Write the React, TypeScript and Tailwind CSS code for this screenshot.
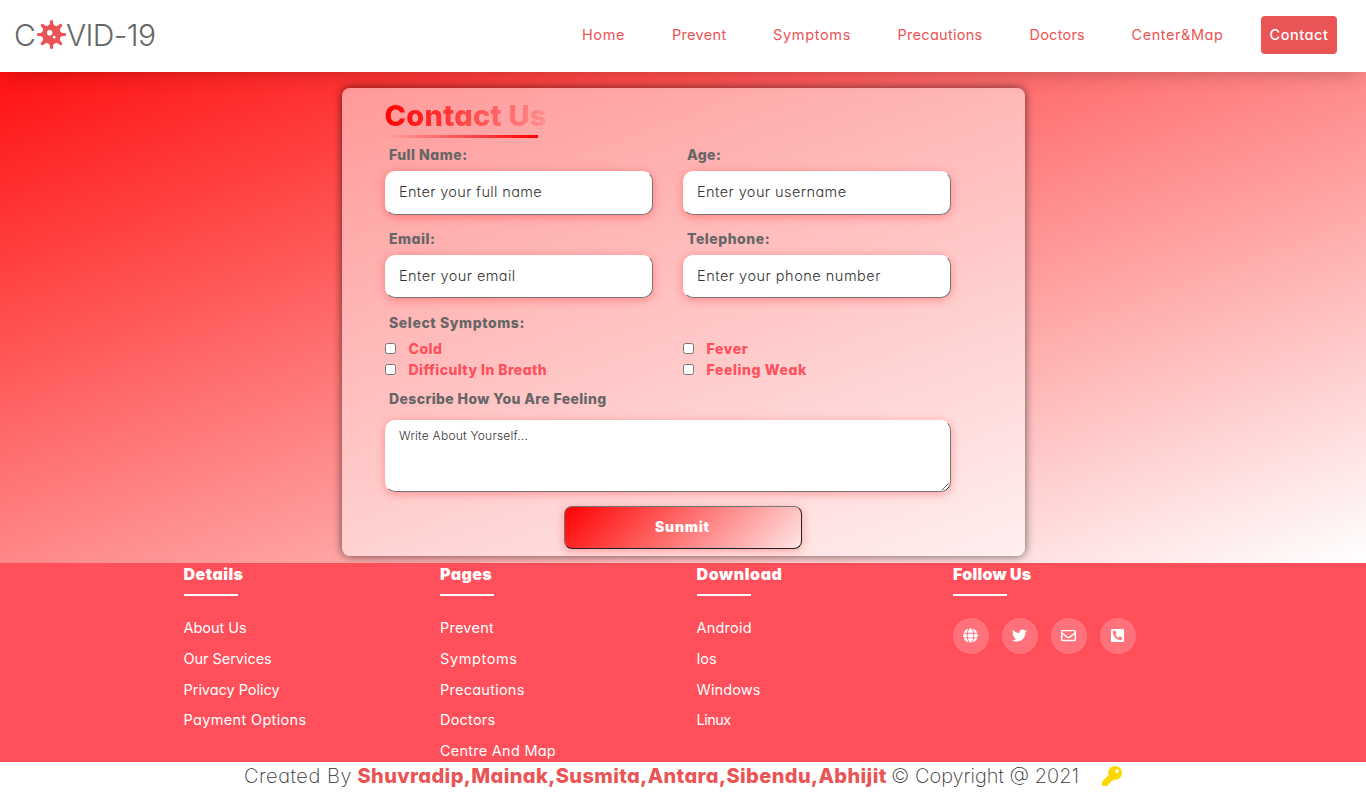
import { FaGlobe, FaKey, FaPhoneSquareAlt, FaRegEnvelope, FaTwitter, FaVirus } from "react-icons/fa";

const navLinks = [
  { label: "Home", className: "w-[90px] tracking-[0.59px]" },
  { label: "Prevent", className: "w-[101px] tracking-[0.32px]" },
  { label: "Symptoms", className: "w-[124.5px] tracking-[0.66px]" },
  { label: "Precautions", className: "w-[132px] tracking-[0.29px]" },
  { label: "Doctors", className: "w-[102px] tracking-[0.23px]" },
  { label: "Center&Map", className: "w-[129.5px] tracking-[0.57px]" },
];

const fields = [
  { label: "Full Name:", labelClass: "tracking-[0.5px]", placeholder: "Enter your full name", inputClass: "h-11 tracking-[0.35px]" },
  { label: "Age:", labelClass: "tracking-[0.4px]", placeholder: "Enter your username", inputClass: "h-11 tracking-[0.43px]" },
  { label: "Email:", labelClass: "tracking-[0.5px]", placeholder: "Enter your email", inputClass: "h-[43px] tracking-[0.42px]" },
  { label: "Telephone:", labelClass: "tracking-[0.52px]", placeholder: "Enter your phone number", inputClass: "h-[43px] tracking-[0.51px]" },
];

const symptoms = [
  { label: "Cold", className: "tracking-[0.5px]" },
  { label: "Fever", className: "tracking-[0.6px]" },
  { label: "Difficulty In Breath", className: "tracking-[0.42px]" },
  { label: "Feeling Weak", className: "tracking-[0.6px]" },
];

const footerColumns = [
  {
    title: "Details",
    titleClass: "tracking-[0.47px]",
    links: [
      { label: "About Us", className: "tracking-[-0.03px]" },
      { label: "Our Services", className: "tracking-[-0.04px]" },
      { label: "Privacy Policy", className: "tracking-[-0.03px]" },
      { label: "Payment Options", className: "tracking-[0.34px]" },
    ],
  },
  {
    title: "Pages",
    titleClass: "tracking-[0.38px]",
    links: [
      { label: "Prevent", className: "tracking-[0.24px]" },
      { label: "Symptoms", className: "tracking-[0.6px]" },
      { label: "Precautions", className: "tracking-[0.25px]" },
      { label: "Doctors", className: "tracking-[0.22px]" },
      { label: "Centre And Map", className: "tracking-[0.25px]" },
    ],
  },
  {
    title: "Download",
    titleClass: "tracking-[0.6px]",
    links: [
      { label: "Android", className: "tracking-[0.22px]" },
      { label: "Ios", className: "tracking-[-0.08px]" },
      { label: "Windows", className: "tracking-[0.11px]" },
      { label: "Linux", className: "tracking-[-0.5px]" },
    ],
  },
];

const socials = [
  { name: "website", Icon: FaGlobe },
  { name: "twitter", Icon: FaTwitter },
  { name: "mail", Icon: FaRegEnvelope },
  { name: "phone", Icon: FaPhoneSquareAlt },
];

const controlClass =
  "w-full rounded-[10px] border border-white border-r-[#767676] border-b-[#767676] bg-white px-[13.5px] font-light text-[#333] shadow-[0_2px_10px_rgba(255,0,0,0.3)] outline-none placeholder:text-[#333] placeholder:opacity-100";

function Navbar() {
  return (
    <header className="relative z-10 flex h-[72px] items-start justify-between bg-white pr-[29px] pl-[14px] shadow-[0_8px_20px_-8px_rgba(0,0,0,0.25)]">
      <a href="#" className="mt-[13px] flex items-center text-[30px] leading-[44px] font-light text-[#666]">
        <span className="w-[23px]">C</span>
        <FaVirus className="-mt-0.5 size-[29px] text-[#ea5455]" />
        <span className="tracking-[-0.6px]">VID-19</span>
      </a>
      <nav className="mt-4 flex h-[38px] items-center text-[14.5px] text-[#ea5455]">
        {navLinks.map((l) => (
          <a key={l.label} href="#" className={l.className}>
            {l.label}
          </a>
        ))}
        <a href="#" className="flex h-[38px] w-[76px] items-center justify-center rounded bg-[#ea5455] font-medium tracking-[0.54px] text-white">
          Contact
        </a>
      </nav>
    </header>
  );
}

function SectionTitle() {
  return (
    <div className="flex h-[50px] flex-col items-start">
      <h1 className="mt-1.5 bg-[linear-gradient(to_right,#ff0000,#ff8f8f)] bg-clip-text text-[29px] leading-[44px] font-extrabold tracking-[0.25px] text-transparent">Contact Us</h1>
      <div className="-mt-[3px] h-[3px] w-[153px] shrink-0 bg-[linear-gradient(to_left,#ff0000,transparent)]" />
    </div>
  );
}

function ContactForm() {
  return (
    <form className="mx-auto h-[468px] w-[683px] rounded-lg bg-white/50 pr-[74px] pl-[43px] shadow-[0_0_10px_rgba(0,0,0,0.6)]">
      <SectionTitle />
      <div className="grid grid-cols-[268px_268px] gap-x-[30px] pt-[7px]">
        {fields.map((f) => (
          <label key={f.label} className="flex h-[84px] flex-col">
            <span className={`pl-[4.5px] text-[14px] leading-[20px] font-extrabold text-[#666] ${f.labelClass}`}>{f.label}</span>
            <input type="text" placeholder={f.placeholder} className={`mt-[6px] pb-[3px] text-[14.5px] ${controlClass} ${f.inputClass}`} />
          </label>
        ))}
      </div>
      <h2 className="pl-[4.5px] text-[14px] leading-[20px] font-extrabold tracking-[0.6px] text-[#666]">Select Symptoms:</h2>
      <div className="grid grid-cols-[268px_268px] gap-x-[30px] pt-[5px]">
        {symptoms.map((s) => (
          <label key={s.label} className="flex h-[21px] items-center">
            <input type="checkbox" className="mr-[13px] size-[11px] appearance-none rounded-[2.5px] border border-[#767676] bg-white" />
            <span className={`text-[14px] leading-[21px] font-extrabold text-[#ff4f5a] ${s.className}`}>{s.label}</span>
          </label>
        ))}
      </div>
      <h2 className="mt-[9px] pl-[4.5px] text-[14px] leading-[20px] font-extrabold tracking-[0.38px] text-[#666]">Describe How You Are Feeling</h2>
      <textarea placeholder="Write About Yourself..." className={`mt-[11px] block h-[72px] pt-[6px] text-[12px] leading-[18px] tracking-[0.23px] ${controlClass}`} />
      <button
        type="button"
        className="mt-[14px] ml-[179px] block h-[43px] w-[238px] rounded-lg border border-[#767676] border-r-[#222] border-b-[#222] bg-[linear-gradient(135deg,#ff0000,#ffe5e5)] pb-0.5 text-[14px] font-black tracking-[0.75px] text-white shadow-[0_2px_10px_rgba(255,0,0,0.3)]"
      >
        Sunmit
      </button>
    </form>
  );
}

function Footer() {
  return (
    <footer className="h-[199px] bg-[#ff4f5a] pl-[183.5px] text-white">
      <div className="grid grid-cols-[repeat(4,256.5px)]">
        {footerColumns.map((c) => (
          <div key={c.title}>
            <h3 className={`h-[23px] text-[16px] leading-[23px] font-black ${c.titleClass}`}>{c.title}</h3>
            <div className="mt-2 h-0.5 w-[54px] bg-white" />
            <ul className="mt-[17px] text-[14.5px] leading-[30.75px]">
              {c.links.map((l) => (
                <li key={l.label} className={l.className}>
                  <a href="#">{l.label}</a>
                </li>
              ))}
            </ul>
          </div>
        ))}
        <div>
          <h3 className="h-[23px] text-[16px] leading-[23px] font-black tracking-[0.22px]">Follow Us</h3>
          <div className="mt-2 h-0.5 w-[54px] bg-white" />
          <div className="mt-[22px] flex gap-[13px]">
            {socials.map(({ name, Icon }) => (
              <a key={name} href="#" aria-label={name} className="flex size-9 items-center justify-center rounded-full bg-white/20 pr-px pb-px">
                <Icon className="size-[15px]" />
              </a>
            ))}
          </div>
        </div>
      </div>
    </footer>
  );
}

export default function App() {
  return (
    <div className="h-[792px] overflow-hidden bg-white font-['Inter','Noto_Sans',sans-serif] [font-feature-settings:'cv11']">
      <Navbar />
      <main className="-mt-[72px] h-[563px] bg-[linear-gradient(160deg,#ff0000,#ffffff)] pt-[88px]">
        <ContactForm />
      </main>
      <Footer />
      <div className="flex h-[28px] items-center pl-[244px] text-[20px] leading-[28px] whitespace-nowrap text-[#333]">
        <span className="w-[113.5px] font-extralight tracking-[0.55px]">Created By</span>
        <span className="w-[533.5px] font-extrabold tracking-[0.4px] text-[#ea5455]">Shuvradip,Mainak,Susmita,Antara,Sibendu,Abhijit</span>
        <span className="w-[211px] font-extralight">© Copyright @ 2021</span>
        <FaKey className="size-5 text-[#ffd700]" />
      </div>
    </div>
  );
}
